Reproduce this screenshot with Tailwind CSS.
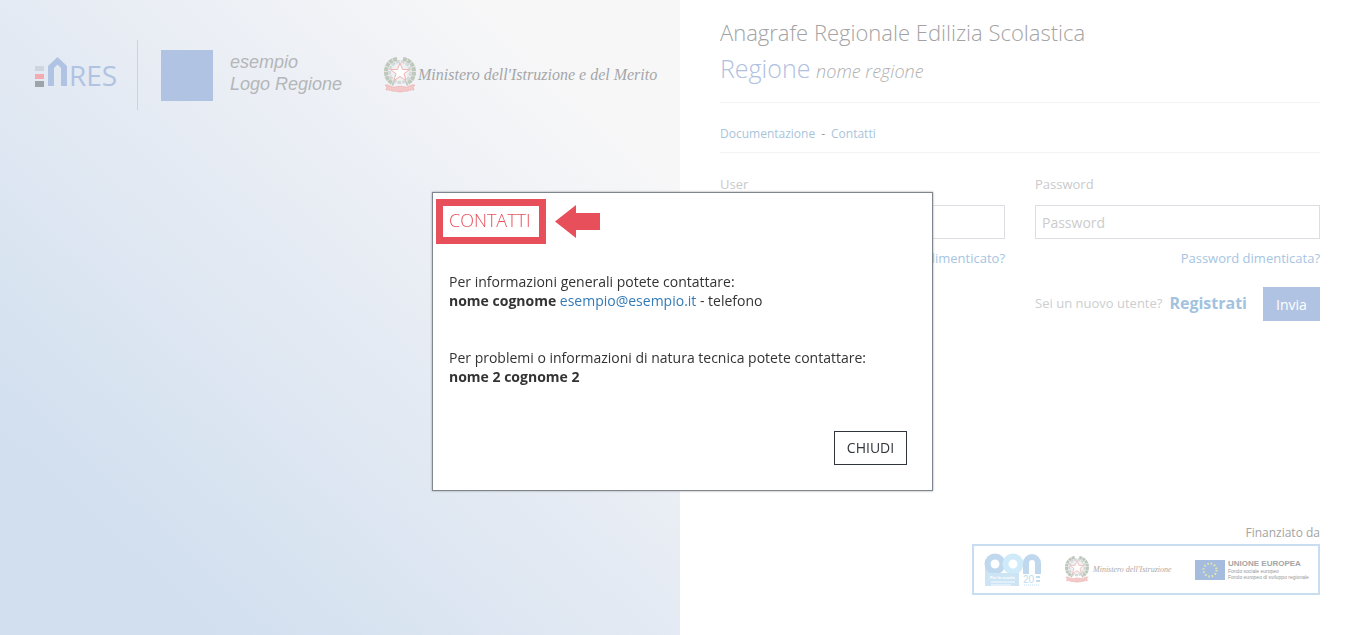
<!DOCTYPE html>
<html lang="it">
<head>
    <meta charset="UTF-8">
    <meta name="viewport" content="width=device-width, initial-scale=1.0">
    <title>Anagrafe Regionale Edilizia Scolastica</title>
    <script src="https://cdn.jsdelivr.net/npm/@tailwindcss/browser@4"></script>
</head>
<body class="bg-white font-['Open_Sans',sans-serif] text-[13px] text-[#333]">
    <!-- Emblema della Repubblica, usato in testata e nel piede -->
    <svg class="hidden" aria-hidden="true">
        <symbol id="emblema" viewBox="0 0 32 36">
            <circle cx="16" cy="15" r="10.500" fill="#eef0f1" stroke="#d6d9da" stroke-width="3" stroke-dasharray="4 1"/>
            <path d="M13 2C6 3 2 8 2 15c0 6 3 10 8 12" fill="none" stroke="#bfc9bb" stroke-width="4" stroke-dasharray="4 .6"/>
            <path d="M19 2c7 1 11 6 11 13 0 6-3 10-8 12" fill="none" stroke="#bfc9bb" stroke-width="4" stroke-dasharray="4 .6"/>
            <path d="M16 6l2.500 6.500h7l-5.500 4.200 2 6.800-6-4-6 4 2-6.800-5.500-4.200h7z" fill="#fff" stroke="#f0b4b4" stroke-width="1"/>
            <path d="M1 28c4-1 6 3 10 2s7-1 10 0 6-3 10-2l-2 2 1 3c-4-1-6 2-9 1l-5 1-5-1c-3 1-5-2-9-1l1-3z" fill="#f3c8c8" stroke="#eeafaf" stroke-width=".7"/>
        </symbol>
    </svg>

    <main class="flex min-h-screen">
        <section class="w-1/2 bg-linear-to-tr from-[#d1dfef] from-15% via-[#e7ecf4] via-55% to-[#f7f7f8] to-85%">
            <header class="flex items-center pt-10 pl-[35px]">
                <div class="flex w-[102px] shrink-0 items-end pb-[6px]">
                    <svg class="h-[30px] w-8" viewBox="0 0 32 30">
                        <path d="M0 9h9v5H0z" fill="#cfd5dd"/>
                        <path d="M0 17h9v5H0z" fill="#f4abb0"/>
                        <path d="M0 24h9v6H0z" fill="#9ea4a9"/>
                        <path d="M13 29V9l9.500-9L32 9v20h-6V11l-3.500-3.500L19 11v18z" fill="#b0c3e2"/>
                    </svg>
                    <span class="pl-[2px] text-[28px] leading-6 text-[#b0c3e2]">RES</span>
                </div>
                <div class="h-[70px] w-px shrink-0 bg-[#cfd3d8]"></div>
                <div class="ml-[23px] h-[51px] w-[52px] shrink-0 bg-[#b0c3e2]"></div>
                <p class="ml-[17px] w-[154px] shrink-0 pb-1 font-['Liberation_Sans',sans-serif] text-[18px] italic leading-[22px] text-[#b4b6b9]">esempio<br>Logo Regione</p>
                <svg class="h-9 w-8 shrink-0"><use href="#emblema"/></svg>
                <p class="ml-[2px] whitespace-nowrap font-['Liberation_Serif',serif] text-[16px] italic text-[#a5a6a8]">Ministero dell'Istruzione e del Merito</p>
            </header>
        </section>

        <section class="flex w-1/2 flex-col px-10 pb-10">
            <h1 class="border-b border-[#f3f3f3] pt-[14px] pb-[13px] text-[22px] font-light leading-9 text-[#a3a3a3]">
                Anagrafe Regionale Edilizia Scolastica<br>
                <span class="text-[25px] text-[#b0c0e0]">Regione</span>
                <em class="text-[18px] text-[#b0b0b0]">nome regione</em>
            </h1>
            <nav class="flex gap-[6px] border-b border-[#f3f3f3] pt-[21px] pb-2 text-[12px] leading-5 text-[#a9c4da]">
                <a href="#">Documentazione</a><span class="text-[#999]">-</span><a href="#">Contatti</a>
            </nav>
            <form class="pt-[19px]">
                <div class="grid grid-cols-2 gap-[30px] text-[#c8cacc]">
                    <div>
                        <label for="user" class="block leading-6">User</label>
                        <input id="user" type="text" placeholder="User" class="mt-[9px] h-[34px] w-full border border-[#dcdee4] px-[6px] text-[14px] placeholder:text-[#ccc]">
                        <a href="#" class="mt-[7px] block text-right leading-6 text-[#a6c5e2]">Username dimenticato?</a>
                    </div>
                    <div>
                        <label for="password" class="block leading-6">Password</label>
                        <input id="password" type="password" placeholder="Password" class="mt-[9px] h-[34px] w-full border border-[#dcdee4] px-[6px] text-[14px] placeholder:text-[#ccc]">
                        <a href="#" class="mt-[7px] block text-right leading-6 text-[#a6c5e2]">Password dimenticata?</a>
                    </div>
                </div>
                <div class="mt-[17px] flex items-center justify-end text-[#ccced0]">
                    <span>Sei un nuovo utente?</span>
                    <a href="#" class="ml-[7px] pb-[3px] text-[16px] font-bold text-[#a2c2df]">Registrati</a>
                    <button type="submit" class="ml-4 h-[34px] w-[57px] bg-[#b0c3e2] text-[14px] text-white">Invia</button>
                </div>
            </form>
            <footer class="mt-auto flex flex-col items-end">
                <p class="text-[12px] leading-[22px] text-[#a3a3a3]">Finanziato da</p>
                <div class="flex h-[51px] w-[348px] items-center border-2 border-[#c9ddf0] pl-[10px] font-['Liberation_Sans',sans-serif]">
                    <svg class="h-9 w-[58px]" viewBox="0 0 58 36">
                        <path d="M4 34V12" stroke="#cde4f4" stroke-width="6"/>
                        <circle cx="11" cy="12" r="7.500" fill="none" stroke="#c0d8ee" stroke-width="6"/>
                        <circle cx="29" cy="12" r="7.500" fill="none" stroke="#cfeaf8" stroke-width="6"/>
                        <path d="M42 22V11a6 6 0 0 1 12 0v11" fill="none" stroke="#c0d8ee" stroke-width="6"/>
                        <path d="M1 21h34v13H1z" fill="#cde4f4"/>
                        <text x="6" y="27" font-size="4" font-weight="bold" fill="#fff">Per la scuola</text>
                        <path d="M7 30h24M7 33h20" stroke="#f4fafd"/>
                        <text x="39" y="31" font-size="10" fill="#c0dcee">20</text>
                        <path d="M52 25h4M52 29h4" stroke="#c0dcee" stroke-width="2"/>
                        <path d="M40 33h16" stroke="#c0dcee" stroke-dasharray="1 1"/>
                    </svg>
                    <svg class="ml-[23px] h-[27px] w-6"><use href="#emblema"/></svg>
                    <span class="ml-1 w-[102px] whitespace-nowrap font-['Liberation_Serif',serif] text-[8px] italic text-[#aaa]">Ministero dell'Istruzione</span>
                    <svg class="h-5 w-[30px]" viewBox="0 0 30 20">
                        <path d="M0 0h30v20H0z" fill="#a5bcde"/>
                        <circle cx="15" cy="10" r="6.500" fill="none" stroke="#e9eba8" stroke-width="2" stroke-dasharray="1.400 2"/>
                    </svg>
                    <div class="ml-[3px] whitespace-nowrap text-[5px] leading-[6px] text-[#999]">
                        <p class="text-[8px] font-bold leading-[9px] text-[#a5a5a5]">UNIONE EUROPEA</p>
                        <p>Fondo sociale europeo</p>
                        <p>Fondo europeo di sviluppo regionale</p>
                    </div>
                </div>
            </footer>
        </section>
    </main>

    <!-- Finestra dei contatti -->
    <div class="fixed inset-0 flex items-start justify-center pt-48 pl-[5px]">
        <div role="dialog" aria-labelledby="titolo" class="w-[501px] border border-[#80868e] bg-white px-[3px] pt-[6px] pb-[25px] text-[14px] leading-[19px] shadow-[0_0_2px_#999]">
            <div class="flex items-center">
                <h2 id="titolo" class="flex h-[45px] w-[110px] items-center border-[7px] border-[#e7505a] px-[6px] pb-[2px] text-[18px] font-light text-[#e7505a]">CONTATTI</h2>
                <svg class="ml-[9px] h-[33px] w-[45px]" viewBox="0 0 45 33">
                    <path d="M0 16.500L21 0v8h24v17H21v8z" fill="#e7505a"/>
                </svg>
            </div>
            <div class="px-[13px] pt-7">
                <p>Per informazioni generali potete contattare:<br>
                <b>nome cognome</b> <a href="#" class="text-[#337ab7]">esempio@esempio.it</a> - telefono</p>
                <p class="pt-[38px]">Per problemi o informazioni di natura tecnica potete contattare:<br>
                <b>nome 2 cognome 2</b></p>
            </div>
            <div class="flex justify-end pt-[45px] pr-[22px]">
                <button type="button" class="h-[34px] w-[73px] border border-[#2f353b] pb-[2px] text-[#2f353b]">CHIUDI</button>
            </div>
        </div>
    </div>
</body>
</html>
